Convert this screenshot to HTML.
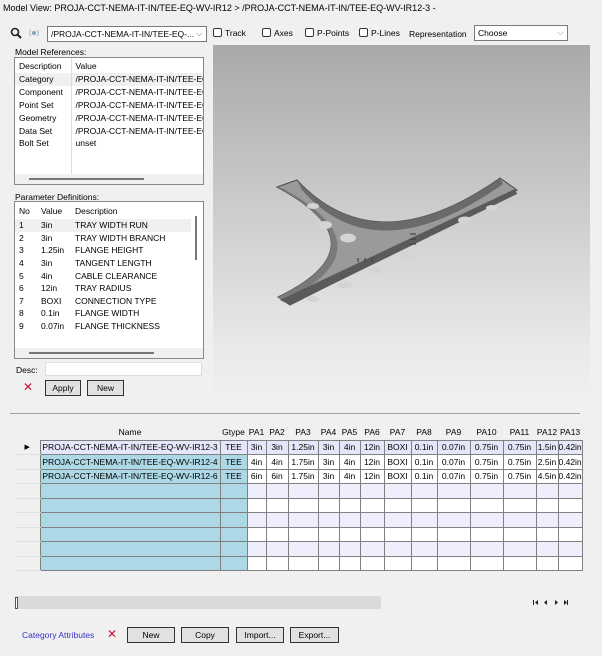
<!DOCTYPE html>
<html><head><style>
*{box-sizing:border-box;margin:0;padding:0}
body{width:602px;height:656px;background:#f0f0f0;font-family:"Liberation Sans",Arial,sans-serif;font-size:8.5px;color:#000;position:relative;overflow:hidden}
.a{position:absolute;white-space:nowrap}
.box{position:absolute;background:#fff;border:1px solid #a0a0a0;overflow:hidden}
.btn{position:absolute;background:#e1e1e1;border:1px solid #333;text-align:center;font-size:8.5px;line-height:14px}
.cb{display:inline-block;width:9px;height:9px;border:1px solid #333;border-radius:2px;background:#fff;vertical-align:-1px;margin-right:3px}
table{border-collapse:collapse}
.mr,.pd{table-layout:fixed}
.mr td{height:12.8px;padding:0 4px;font-size:8.5px;white-space:nowrap;overflow:hidden}
.pd td{height:12.6px;padding:0 4px;font-size:8.5px;white-space:nowrap;overflow:hidden}
.g{position:absolute;left:15px;top:425px;border-collapse:collapse;table-layout:fixed}
.g td{height:14.5px;border:1px solid #808080;font-size:8.5px;text-align:center;padding:0;overflow:hidden;white-space:nowrap}
.g tr.h td{border:none;height:15px;background:#f0f0f0}
.g td.rh{border:none;border-bottom:1px solid #e0e0e0;background:#f0f0f0}
</style></head><body>
<div class="a" style="left:3px;top:3px;font-size:9px">Model View: PROJA-CCT-NEMA-IT-IN/TEE-EQ-WV-IR12 &gt; /PROJA-CCT-NEMA-IT-IN/TEE-EQ-WV-IR12-3 -</div>
<svg class="a" style="left:10px;top:27px" width="12" height="12"><circle cx="5" cy="5" r="3.5" fill="none" stroke="#222" stroke-width="1.6"/><line x1="7.5" y1="7.5" x2="11" y2="11" stroke="#222" stroke-width="2"/></svg>
<svg class="a" style="left:28px;top:27px" width="12" height="12"><circle cx="6" cy="6" r="2" fill="#7ab"/><path d="M3 3a4 4 0 0 0 0 6M9 3a4 4 0 0 1 0 6" fill="none" stroke="#9bd" stroke-width="1"/></svg>
<div class="box" style="left:47px;top:26px;width:160px;height:16px;border-color:#7a7a7a"><span class="a" style="left:3px;top:2px">/PROJA-CCT-NEMA-IT-IN/TEE-EQ-...</span><span class="a" style="left:148px;top:1px;color:#666">⌵</span></div>
<div class="a" style="left:213px;top:28px"><span class="cb"></span>Track</div>
<div class="a" style="left:262px;top:28px"><span class="cb"></span>Axes</div>
<div class="a" style="left:305px;top:28px"><span class="cb"></span>P-Points</div>
<div class="a" style="left:359px;top:28px"><span class="cb"></span>P-Lines</div>
<div class="a" style="left:409px;top:29px">Representation</div>
<div class="box" style="left:474px;top:25px;width:94px;height:16px;border-color:#7a7a7a"><span class="a" style="left:3px;top:2px">Choose</span><span class="a" style="left:82px;top:1px;color:#888">⌵</span></div>

<div class="a" style="left:15px;top:47px">Model References:</div>
<div class="box" style="left:14px;top:57px;width:190px;height:128px;border-color:#888">
<table class="mr" style="position:absolute;left:0;top:0;width:188px">
<colgroup><col style="width:56px"><col style="width:132px"></colgroup>
<tr><td style="height:15px;border-right:1px solid #ddd">Description</td><td>Value</td></tr>
<tr style="background:#f0f0f0"><td style="border-right:1px solid #ddd">Category</td><td>/PROJA-CCT-NEMA-IT-IN/TEE-EC</td></tr>
<tr><td style="border-right:1px solid #ddd">Component</td><td>/PROJA-CCT-NEMA-IT-IN/TEE-EC</td></tr>
<tr><td style="border-right:1px solid #ddd">Point Set</td><td>/PROJA-CCT-NEMA-IT-IN/TEE-EC</td></tr>
<tr><td style="border-right:1px solid #ddd">Geometry</td><td>/PROJA-CCT-NEMA-IT-IN/TEE-EC</td></tr>
<tr><td style="border-right:1px solid #ddd">Data Set</td><td>/PROJA-CCT-NEMA-IT-IN/TEE-EC</td></tr>
<tr><td style="border-right:1px solid #ddd">Bolt Set</td><td>unset</td></tr>
<tr><td style="border-right:1px solid #ddd"></td><td></td></tr>
<tr><td style="border-right:1px solid #ddd"></td><td></td></tr>
</table>
<div class="a" style="left:0;top:116px;width:188px;height:10px;background:#f0f0f0"><div class="a" style="left:14px;top:4px;width:115px;height:2px;background:#777"></div></div>
</div>

<div class="a" style="left:15px;top:192px">Parameter Definitions:</div>
<div class="box" style="left:14px;top:201px;width:190px;height:158px;border-color:#888">
<table class="pd" style="position:absolute;left:0;top:0;width:176px">
<colgroup><col style="width:22px"><col style="width:34px"><col style="width:120px"></colgroup>
<tr><td style="height:17px">No</td><td>Value</td><td>Description</td></tr>
<tr style="background:#f0f0f0"><td>1</td><td>3in</td><td>TRAY WIDTH RUN</td></tr>
<tr><td>2</td><td>3in</td><td>TRAY WIDTH BRANCH</td></tr>
<tr><td>3</td><td>1.25in</td><td>FLANGE HEIGHT</td></tr>
<tr><td>4</td><td>3in</td><td>TANGENT LENGTH</td></tr>
<tr><td>5</td><td>4in</td><td>CABLE CLEARANCE</td></tr>
<tr><td>6</td><td>12in</td><td>TRAY RADIUS</td></tr>
<tr><td>7</td><td>BOXI</td><td>CONNECTION TYPE</td></tr>
<tr><td>8</td><td>0.1in</td><td>FLANGE WIDTH</td></tr>
<tr><td>9</td><td>0.07in</td><td>FLANGE THICKNESS</td></tr>
</table>
<div class="a" style="left:180px;top:14px;width:2px;height:44px;background:#777"></div>
<div class="a" style="left:0;top:146px;width:188px;height:10px;background:#f0f0f0"><div class="a" style="left:14px;top:4px;width:125px;height:2px;background:#777"></div></div>
</div>

<div class="a" style="left:16px;top:365px">Desc:</div>
<div class="box" style="left:45px;top:362px;width:157px;height:14px;border-color:#ddd"></div>
<div class="a" style="left:23px;top:380px;color:#c8102e;font-size:12px">✕</div>
<div class="btn" style="left:45px;top:380px;width:36px;height:16px">Apply</div>
<div class="btn" style="left:87px;top:380px;width:37px;height:16px">New</div>

<div class="a" style="left:213px;top:45px;width:377px;height:359px;background:linear-gradient(180deg,#a9a9a9 0%,#c8c8c8 40%,#eaeaea 85%,#f0f0f0 100%)"></div>
<svg class="a" style="left:270px;top:170px" width="250" height="140" viewBox="0 0 250 140">
<path d="M7 17 L27 10 Q106 95 230 8 L247 20 L20 135 L8 127 Q115 75 7 17 Z" fill="#9a9a9a" stroke="#4a4a4a" stroke-width="1"/>
<path d="M27 10 Q106 95 230 8 L233 14 Q106 104 32 20 Z" fill="#6a6a6a"/>
<path d="M8 127 Q115 75 7 17 L14 19 Q121 78 14 131 Z" fill="#7a7a7a"/>
<path d="M10 130 L245 19 L247 24 L20 135 Z" fill="#5a5a5a"/>
<g fill="#d4d4d4"><ellipse cx="43" cy="36" rx="6" ry="3"/><ellipse cx="55" cy="55" rx="7" ry="4"/><ellipse cx="78" cy="68" rx="8" ry="4.5"/><ellipse cx="195" cy="50" rx="7" ry="3.5"/><ellipse cx="135" cy="85" rx="7" ry="3.5"/><ellipse cx="105" cy="100" rx="7" ry="3.5"/><ellipse cx="75" cy="115" rx="7" ry="3.5"/><ellipse cx="165" cy="68" rx="6" ry="3"/><ellipse cx="222" cy="38" rx="6" ry="3"/><ellipse cx="43" cy="129" rx="6" ry="3"/></g>
<g stroke="#444" stroke-width="1.2"><line x1="140" y1="64" x2="146" y2="64"/><line x1="140" y1="69" x2="146" y2="69"/><line x1="140" y1="74" x2="146" y2="74"/><line x1="88" y1="88" x2="88" y2="92"/><line x1="95" y1="88" x2="95" y2="92"/><line x1="102" y1="88" x2="102" y2="92"/></g>
</svg>

<div class="a" style="left:10px;top:413px;width:570px;height:1px;background:#a0a0a0"></div>

<table class="g">
<colgroup><col style="width:25px"><col style="width:180px"><col style="width:27px"><col style="width:19px"><col style="width:22px"><col style="width:30px"><col style="width:21px"><col style="width:21px"><col style="width:24px"><col style="width:27px"><col style="width:26px"><col style="width:33px"><col style="width:33px"><col style="width:33px"><col style="width:22px"><col style="width:22px"></colgroup>
<tr class="h"><td></td><td>Name</td><td>Gtype</td><td>PA1</td><td>PA2</td><td>PA3</td><td>PA4</td><td>PA5</td><td>PA6</td><td>PA7</td><td>PA8</td><td>PA9</td><td>PA10</td><td>PA11</td><td>PA12</td><td>PA13</td></tr>
<tr style="background:#e6e6fa"><td class="rh" style="font-size:7px">▶</td><td>PROJA-CCT-NEMA-IT-IN/TEE-EQ-WV-IR12-3</td><td>TEE</td><td>3in</td><td>3in</td><td>1.25in</td><td>3in</td><td>4in</td><td>12in</td><td>BOXI</td><td>0.1in</td><td>0.07in</td><td>0.75in</td><td>0.75in</td><td>1.5in</td><td>0.42in</td></tr>
<tr style="background:#fff"><td class="rh"></td><td style="background:#add8e6">PROJA-CCT-NEMA-IT-IN/TEE-EQ-WV-IR12-4</td><td style="background:#add8e6">TEE</td><td>4in</td><td>4in</td><td>1.75in</td><td>3in</td><td>4in</td><td>12in</td><td>BOXI</td><td>0.1in</td><td>0.07in</td><td>0.75in</td><td>0.75in</td><td>2.5in</td><td>0.42in</td></tr>
<tr style="background:#fff"><td class="rh"></td><td style="background:#add8e6">PROJA-CCT-NEMA-IT-IN/TEE-EQ-WV-IR12-6</td><td style="background:#add8e6">TEE</td><td>6in</td><td>6in</td><td>1.75in</td><td>3in</td><td>4in</td><td>12in</td><td>BOXI</td><td>0.1in</td><td>0.07in</td><td>0.75in</td><td>0.75in</td><td>4.5in</td><td>0.42in</td></tr>
<tr style="background:#eeeefc"><td class="rh"></td><td style="background:#add8e6"></td><td style="background:#add8e6"></td><td></td><td></td><td></td><td></td><td></td><td></td><td></td><td></td><td></td><td></td><td></td><td></td><td></td></tr>
<tr style="background:#fff"><td class="rh"></td><td style="background:#add8e6"></td><td style="background:#add8e6"></td><td></td><td></td><td></td><td></td><td></td><td></td><td></td><td></td><td></td><td></td><td></td><td></td><td></td></tr>
<tr style="background:#eeeefc"><td class="rh"></td><td style="background:#add8e6"></td><td style="background:#add8e6"></td><td></td><td></td><td></td><td></td><td></td><td></td><td></td><td></td><td></td><td></td><td></td><td></td><td></td></tr>
<tr style="background:#fff"><td class="rh"></td><td style="background:#add8e6"></td><td style="background:#add8e6"></td><td></td><td></td><td></td><td></td><td></td><td></td><td></td><td></td><td></td><td></td><td></td><td></td><td></td></tr>
<tr style="background:#eeeefc"><td class="rh"></td><td style="background:#add8e6"></td><td style="background:#add8e6"></td><td></td><td></td><td></td><td></td><td></td><td></td><td></td><td></td><td></td><td></td><td></td><td></td><td></td></tr>
<tr style="background:#fff"><td class="rh"></td><td style="background:#add8e6"></td><td style="background:#add8e6"></td><td></td><td></td><td></td><td></td><td></td><td></td><td></td><td></td><td></td><td></td><td></td><td></td><td></td></tr>
</table>

<div class="a" style="left:15px;top:596px;width:366px;height:13px;background:#dadada"></div>
<div class="a" style="left:15px;top:597px;width:3px;height:12px;border:1px solid #555;background:#fff"></div>
<svg class="a" style="left:532px;top:598px" width="40" height="10"><g fill="#222"><rect x="1" y="2" width="1" height="5"/><path d="M6 2v5L3 4.5z"/><path d="M15 2v5l-3-2.5z"/><path d="M23 2v5l3-2.5z"/><path d="M32 2v5l3-2.5z"/><rect x="35" y="2" width="1" height="5"/></g></svg>

<div class="a" style="left:22px;top:630px;color:#3333cc">Category Attributes</div>
<div class="a" style="left:107px;top:627px;color:#c8102e;font-size:12px">✕</div>
<div class="btn" style="left:127px;top:627px;width:48px;height:16px">New</div>
<div class="btn" style="left:181px;top:627px;width:48px;height:16px">Copy</div>
<div class="btn" style="left:236px;top:627px;width:48px;height:16px">Import...</div>
<div class="btn" style="left:290px;top:627px;width:49px;height:16px">Export...</div>
</body></html>
